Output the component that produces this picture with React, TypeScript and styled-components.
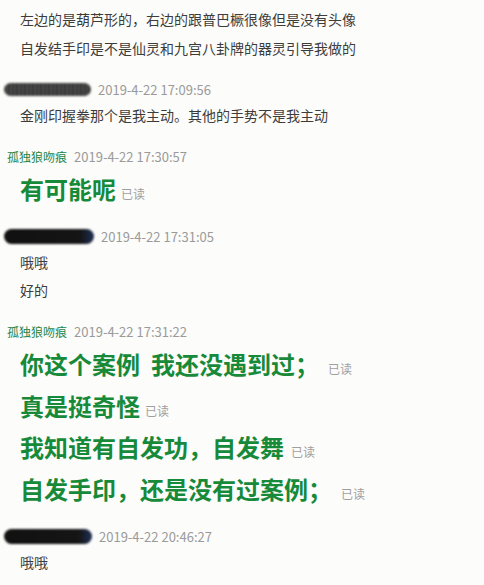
import React from "react";
import styled, { createGlobalStyle } from "styled-components";

const Global = createGlobalStyle`
  html, body {
    margin: 0;
    padding: 0;
    background: #fcfcfb;
  }
  body {
    font-family: "Noto Sans CJK SC", "Noto Sans", "Liberation Sans", sans-serif;
  }
`;

const Page = styled.div`
  display: flex;
  flex-direction: column;
  gap: 17.5px;
  padding-top: 5px;
  width: 484px;
  height: 585px;
  overflow: hidden;
  box-sizing: border-box;
`;

const Group = styled.div`
  display: flex;
  flex-direction: column;
`;

const Header = styled.div`
  display: flex;
  align-items: center;
  gap: 7px;
  height: 20px;
  padding-left: 4px;
  margin-bottom: 1px;
`;

const Blob = styled.span<{ $w: number; $h: number; $tail?: boolean }>`
  display: inline-block;
  width: ${(p) => p.$w}px;
  height: ${(p) => p.$h}px;
  border-radius: ${(p) => p.$h / 2}px;
  background: ${(p) =>
    p.$tail
      ? "linear-gradient(90deg, #111 0%, #151515 85%, #1e2f55 100%)"
      : "repeating-linear-gradient(90deg, #222 0px, #555 3px, #2a2a2a 5px, #666 8px)"};
  filter: blur(1.1px);
`;

const Name = styled.span`
  margin-left: 3px;
  font-size: 12px;
  color: #1f8548;
  line-height: 20px;
`;

const Time = styled.span`
  font-size: 13px;
  color: #9a9a9a;
  line-height: 20px;
`;

const Line = styled.div`
  padding-left: 20px;
  font-size: 14px;
  line-height: 28.5px;
  height: 28.5px;
  color: #3c3c3c;
  white-space: nowrap;
`;

const Big = styled.div`
  padding-left: 20px;
  font-size: 24px;
  font-weight: 700;
  line-height: 41.5px;
  height: 41.5px;
  color: #178a3a;
  white-space: pre;
`;

const Read = styled.span<{ $gap?: number }>`
  margin-left: ${(p) => p.$gap ?? 5}px;
  font-size: 12px;
  line-height: 1;
  font-weight: 400;
  color: #9f9f9f;
`;

export default function App() {
  return (
    <>
      <Global />
      <Page>
        <Group>
          <Line>左边的是葫芦形的，右边的跟普巴橛很像但是没有头像</Line>
          <Line>自发结手印是不是仙灵和九宫八卦牌的器灵引导我做的</Line>
        </Group>
        <Group>
          <Header>
            <Blob $w={87} $h={13} />
            <Time>2019-4-22 17:09:56</Time>
          </Header>
          <Line>金刚印握拳那个是我主动。其他的手势不是我主动</Line>
        </Group>
        <Group>
          <Header>
            <Name>孤独狼吻痕</Name>
            <Time>2019-4-22 17:30:57</Time>
          </Header>
          <Big>
            有可能呢<Read>已读</Read>
          </Big>
        </Group>
        <Group>
          <Header>
            <Blob $w={90} $h={15} $tail />
            <Time>2019-4-22 17:31:05</Time>
          </Header>
          <Line>哦哦</Line>
          <Line>好的</Line>
        </Group>
        <Group>
          <Header>
            <Name>孤独狼吻痕</Name>
            <Time>2019-4-22 17:31:22</Time>
          </Header>
          <Big>
            你这个案例  我还没遇到过；<Read $gap={9}>已读</Read>
          </Big>
          <Big>
            真是挺奇怪<Read>已读</Read>
          </Big>
          <Big>
            我知道有自发功，自发舞<Read $gap={7}>已读</Read>
          </Big>
          <Big>
            自发手印，还是没有过案例；<Read $gap={9}>已读</Read>
          </Big>
        </Group>
        <Group>
          <Header>
            <Blob $w={88} $h={15} $tail />
            <Time>2019-4-22 20:46:27</Time>
          </Header>
          <Line>哦哦</Line>
        </Group>
      </Page>
    </>
  );
}
